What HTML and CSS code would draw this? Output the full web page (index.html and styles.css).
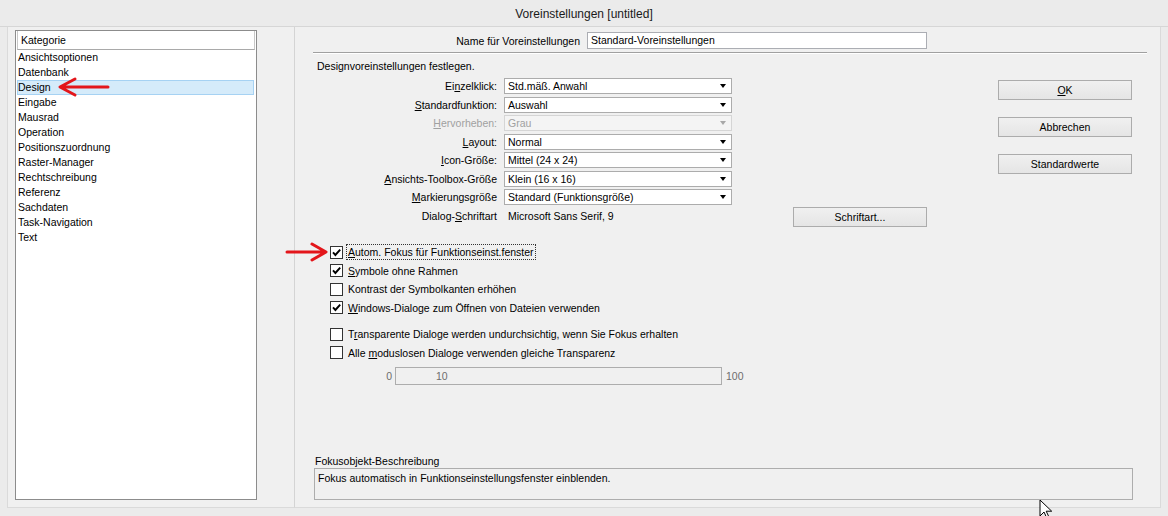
FILE: index.html
```html
<!DOCTYPE html>
<html>

<head>
    <title>Voreinstellungen</title>
    <link rel="stylesheet" href="styles.css">
</head>

<body>
    <div class="window">
        <div class="titlebar">Voreinstellungen [untitled]</div>

        <div class="client">
            <div class="side">
                <div class="list">
                    <div class="list-head">Kategorie</div>
                    <div class="list-items">
                        <div class="list-item">Ansichtsoptionen</div>
                        <div class="list-item">Datenbank</div>
                        <div class="list-item selected">Design</div>
                        <div class="list-item">Eingabe</div>
                        <div class="list-item">Mausrad</div>
                        <div class="list-item">Operation</div>
                        <div class="list-item">Positionszuordnung</div>
                        <div class="list-item">Raster-Manager</div>
                        <div class="list-item">Rechtschreibung</div>
                        <div class="list-item">Referenz</div>
                        <div class="list-item">Sachdaten</div>
                        <div class="list-item">Task-Navigation</div>
                        <div class="list-item">Text</div>
                    </div>
                </div>
            </div>

            <div class="main">
                <div class="name-row">
                    <span class="name-label">Name für Voreinstellungen</span>
                    <div class="name-input">Standard-Voreinstellungen</div>
                </div>
                <div class="sep"></div>

                <div class="body">
                    <div class="settings">
                        <div class="heading">Designvoreinstellungen festlegen.</div>

                        <div class="form">
                            <span class="label">Ei<u>n</u>zelklick:</span>
                            <div class="cell"><div class="combo">Std.mäß. Anwahl</div></div>
                            <span></span>

                            <span class="label"><u>S</u>tandardfunktion:</span>
                            <div class="cell"><div class="combo">Auswahl</div></div>
                            <span></span>

                            <span class="label disabled"><u>H</u>ervorheben:</span>
                            <div class="cell"><div class="combo off">Grau</div></div>
                            <span></span>

                            <span class="label"><u>L</u>ayout:</span>
                            <div class="cell"><div class="combo">Normal</div></div>
                            <span></span>

                            <span class="label"><u>I</u>con-Größe:</span>
                            <div class="cell"><div class="combo">Mittel (24 x 24)</div></div>
                            <span></span>

                            <span class="label"><u>A</u>nsichts-Toolbox-Größe</span>
                            <div class="cell"><div class="combo">Klein (16 x 16)</div></div>
                            <span></span>

                            <span class="label"><u>M</u>arkierungsgröße</span>
                            <div class="cell"><div class="combo">Standard (Funktionsgröße)</div></div>
                            <span></span>

                            <span class="label">Dialog-<u>S</u>chriftart</span>
                            <div class="cell"><span class="value">Microsoft Sans Serif, 9</span></div>
                            <div class="btn font-btn">Schriftart...</div>
                        </div>

                        <div class="checks">
                            <div class="check">
                                <span class="box"><svg width="11" height="11" viewBox="0 0 11 11"><path d="M2 5.4l2.4 2.6L9.2 2.6" stroke="#000" stroke-width="1.9" fill="none"/></svg></span>
                                <span class="focus"><u>A</u>utom. Fokus für Funktionseinst.fenster</span>
                            </div>
                            <div class="check">
                                <span class="box"><svg width="11" height="11" viewBox="0 0 11 11"><path d="M2 5.4l2.4 2.6L9.2 2.6" stroke="#000" stroke-width="1.9" fill="none"/></svg></span>
                                <span><u>S</u>ymbole ohne Rahmen</span>
                            </div>
                            <div class="check">
                                <span class="box"></span>
                                <span>Kontrast der Symbolkanten erhöhen</span>
                            </div>
                            <div class="check">
                                <span class="box"><svg width="11" height="11" viewBox="0 0 11 11"><path d="M2 5.4l2.4 2.6L9.2 2.6" stroke="#000" stroke-width="1.9" fill="none"/></svg></span>
                                <span><u>W</u>indows-Dialoge zum Öffnen von Dateien verwenden</span>
                            </div>
                        </div>

                        <div class="checks second">
                            <div class="check">
                                <span class="box"></span>
                                <span>T<u>r</u>ansparente Dialoge werden undurchsichtig, wenn Sie Fokus erhalten</span>
                            </div>
                            <div class="check">
                                <span class="box"></span>
                                <span>Alle <u>m</u>oduslosen Dialoge verwenden gleiche Transparenz</span>
                            </div>
                        </div>

                        <div class="slider">
                            <span class="min">0</span>
                            <div class="track">10</div>
                            <span class="max">100</span>
                        </div>
                    </div>

                    <div class="actions">
                        <div class="btn"><u>O</u>K</div>
                        <div class="btn">Abbrechen</div>
                        <div class="btn">Standardwerte</div>
                    </div>
                </div>

                <div class="desc">
                    <div class="desc-label">Fokusobjekt-Beschreibung</div>
                    <div class="desc-box">Fokus automatisch in Funktionseinstellungsfenster einblenden.</div>
                </div>
            </div>
        </div>

        <!-- annotations drawn over the screenshot -->
        <svg class="arrow arrow-design" width="56" height="22" viewBox="0 0 56 22">
            <path d="M52 11H6M19 3L4 11l15 8" stroke="#e3161b" stroke-width="3" fill="none" stroke-linecap="round" stroke-linejoin="round"/>
        </svg>
        <svg class="arrow arrow-check" width="46" height="22" viewBox="0 0 46 22">
            <path d="M3 11H40M28 3l14 8-14 8" stroke="#e3161b" stroke-width="3" fill="none" stroke-linecap="round" stroke-linejoin="round"/>
        </svg>
        <svg class="cursor" width="14" height="22" viewBox="0 0 14 22">
            <path d="M1 1v16l4-4 3 6.5 2.2-1-3-6.3h5.5z" fill="#fff" stroke="#000" stroke-width="1"/>
        </svg>
    </div>
</body>

</html>
```

FILE: styles.css
```css
* {
    box-sizing: border-box;
}

body {
    margin: 0;
    background: #f0f0f0;
    font-family: "Liberation Sans", Arial, sans-serif;
    font-size: 10.5px;
    color: #000;
}

u {
    text-underline-offset: 1px;
}

.window {
    position: relative;
    width: 1168px;
    height: 516px;
    overflow: hidden;
    background: #ebebeb;
}

.titlebar {
    height: 27px;
    padding-top: 3px;
    line-height: 23px;
    text-align: center;
    font-size: 12px;
    color: #1a1a1a;
    border-bottom: 1px solid #d6d6d6;
}

.client {
    display: flex;
    height: 481px;
    margin: 0 7px;
    background: #f0f0f0;
}

/* left: category list */
.side {
    width: 288px;
    padding: 3px 0 0 7px;
    border-left: 1px solid #dadada;
    border-right: 1px solid #d4d4d4;
    border-bottom: 1px solid #dadada;
}

.list {
    width: 242px;
    height: 470px;
    background: #fff;
    border: 1px solid #8c8c8c;
}

.list-head {
    height: 19px;
    line-height: 19px;
    padding-left: 3px;
    margin: 0 1px 0 1px;
    border-bottom: 1px solid #a9a9a9;
    border-left: 1px solid #c8c8c8;
    border-right: 1px solid #c8c8c8;
}

.list-item {
    height: 15px;
    line-height: 15px;
    padding-left: 2px;
}

.list-item.selected {
    margin: 0 2px 0 1px;
    padding-left: 0;
    line-height: 13px;
    background: #d5ebfa;
    border: 1px solid #a6d2f3;
}

/* right: settings */
.main {
    flex: 1;
    display: flex;
    flex-direction: column;
    padding: 5px 0 7px 18px;
    border-right: 1px solid #dadada;
    border-bottom: 1px solid #dadada;
}

.name-row {
    display: flex;
    align-items: center;
    height: 17px;
}

.name-label {
    width: 267px;
    margin-right: 7px;
    text-align: right;
}

.name-input {
    width: 340px;
    height: 17px;
    padding-left: 3px;
    line-height: 15px;
    background: #fff;
    border: 1px solid #abadb3;
}

.sep {
    width: 834px;
    height: 1px;
    margin-top: 3px;
    background: #a0a0a0;
    box-shadow: 0 1px 0 #fff;
}

.body {
    display: flex;
}

.settings {
    width: 614px;
}

.heading {
    height: 13px;
    line-height: 13px;
    margin: 7px 0 4px;
    padding-left: 4px;
}

.form {
    display: grid;
    grid-template-columns: 191px 289px 134px;
    grid-auto-rows: 18.5px;
    align-items: center;
}

.label {
    padding-right: 7px;
    text-align: right;
    white-space: nowrap;
}

.label.disabled {
    color: #a0a0a0;
}

.combo {
    position: relative;
    width: 228px;
    height: 16px;
    padding-left: 3px;
    line-height: 14px;
    background: #fff;
    border: 1px solid #acacac;
}

.combo::after {
    content: "";
    position: absolute;
    right: 5px;
    top: 5px;
    border-top: 4px solid #000;
    border-left: 3.5px solid transparent;
    border-right: 3.5px solid transparent;
}

.combo.off {
    color: #a0a0a0;
    background: #f4f4f4;
    border-color: #d5d5d5;
}

.combo.off::after {
    border-top-color: #a8a8a8;
}

.value {
    padding-left: 4px;
}

.btn {
    width: 134px;
    height: 20px;
    line-height: 18px;
    text-align: center;
    background: linear-gradient(#f0f0f0, #e5e5e5);
    border: 1px solid #acacac;
}

.font-btn {
    align-self: start;
}

.checks {
    margin-top: 18px;
    padding-left: 17px;
}

.checks.second {
    margin-top: 8px;
}

.check {
    display: flex;
    align-items: center;
    height: 18.5px;
}

.box {
    display: flex;
    align-items: center;
    justify-content: center;
    width: 13px;
    height: 13px;
    margin-right: 5px;
    background: #fff;
    border: 1px solid #333;
}

.focus {
    margin-left: -2px;
    padding: 1px 1px;
    border: 1px dotted #333;
}

.slider {
    display: flex;
    align-items: center;
    margin-top: 5px;
    padding-left: 67px;
    color: #6d6d6d;
}

.min {
    width: 12px;
    text-align: right;
}

.track {
    width: 327px;
    height: 18px;
    margin-left: 3px;
    padding-left: 40px;
    line-height: 16px;
    border: 1px solid #adadad;
}

.max {
    margin-left: 4px;
}

.actions {
    display: flex;
    flex-direction: column;
    gap: 17px;
    margin: 27px 0 0 71px;
}

.desc {
    margin-top: auto;
}

.desc-label {
    height: 14px;
    line-height: 14px;
    padding-left: 2px;
}

.desc-box {
    width: 819px;
    height: 32px;
    margin-left: 1px;
    padding: 2px 0 0 3px;
    line-height: 14px;
    border: 1px solid #adadad;
}

/* overlays */
.arrow,
.cursor {
    position: absolute;
}

.arrow-design {
    left: 56px;
    top: 76px;
}

.arrow-check {
    left: 284px;
    top: 241px;
}

.cursor {
    left: 1039px;
    top: 499px;
}
```
